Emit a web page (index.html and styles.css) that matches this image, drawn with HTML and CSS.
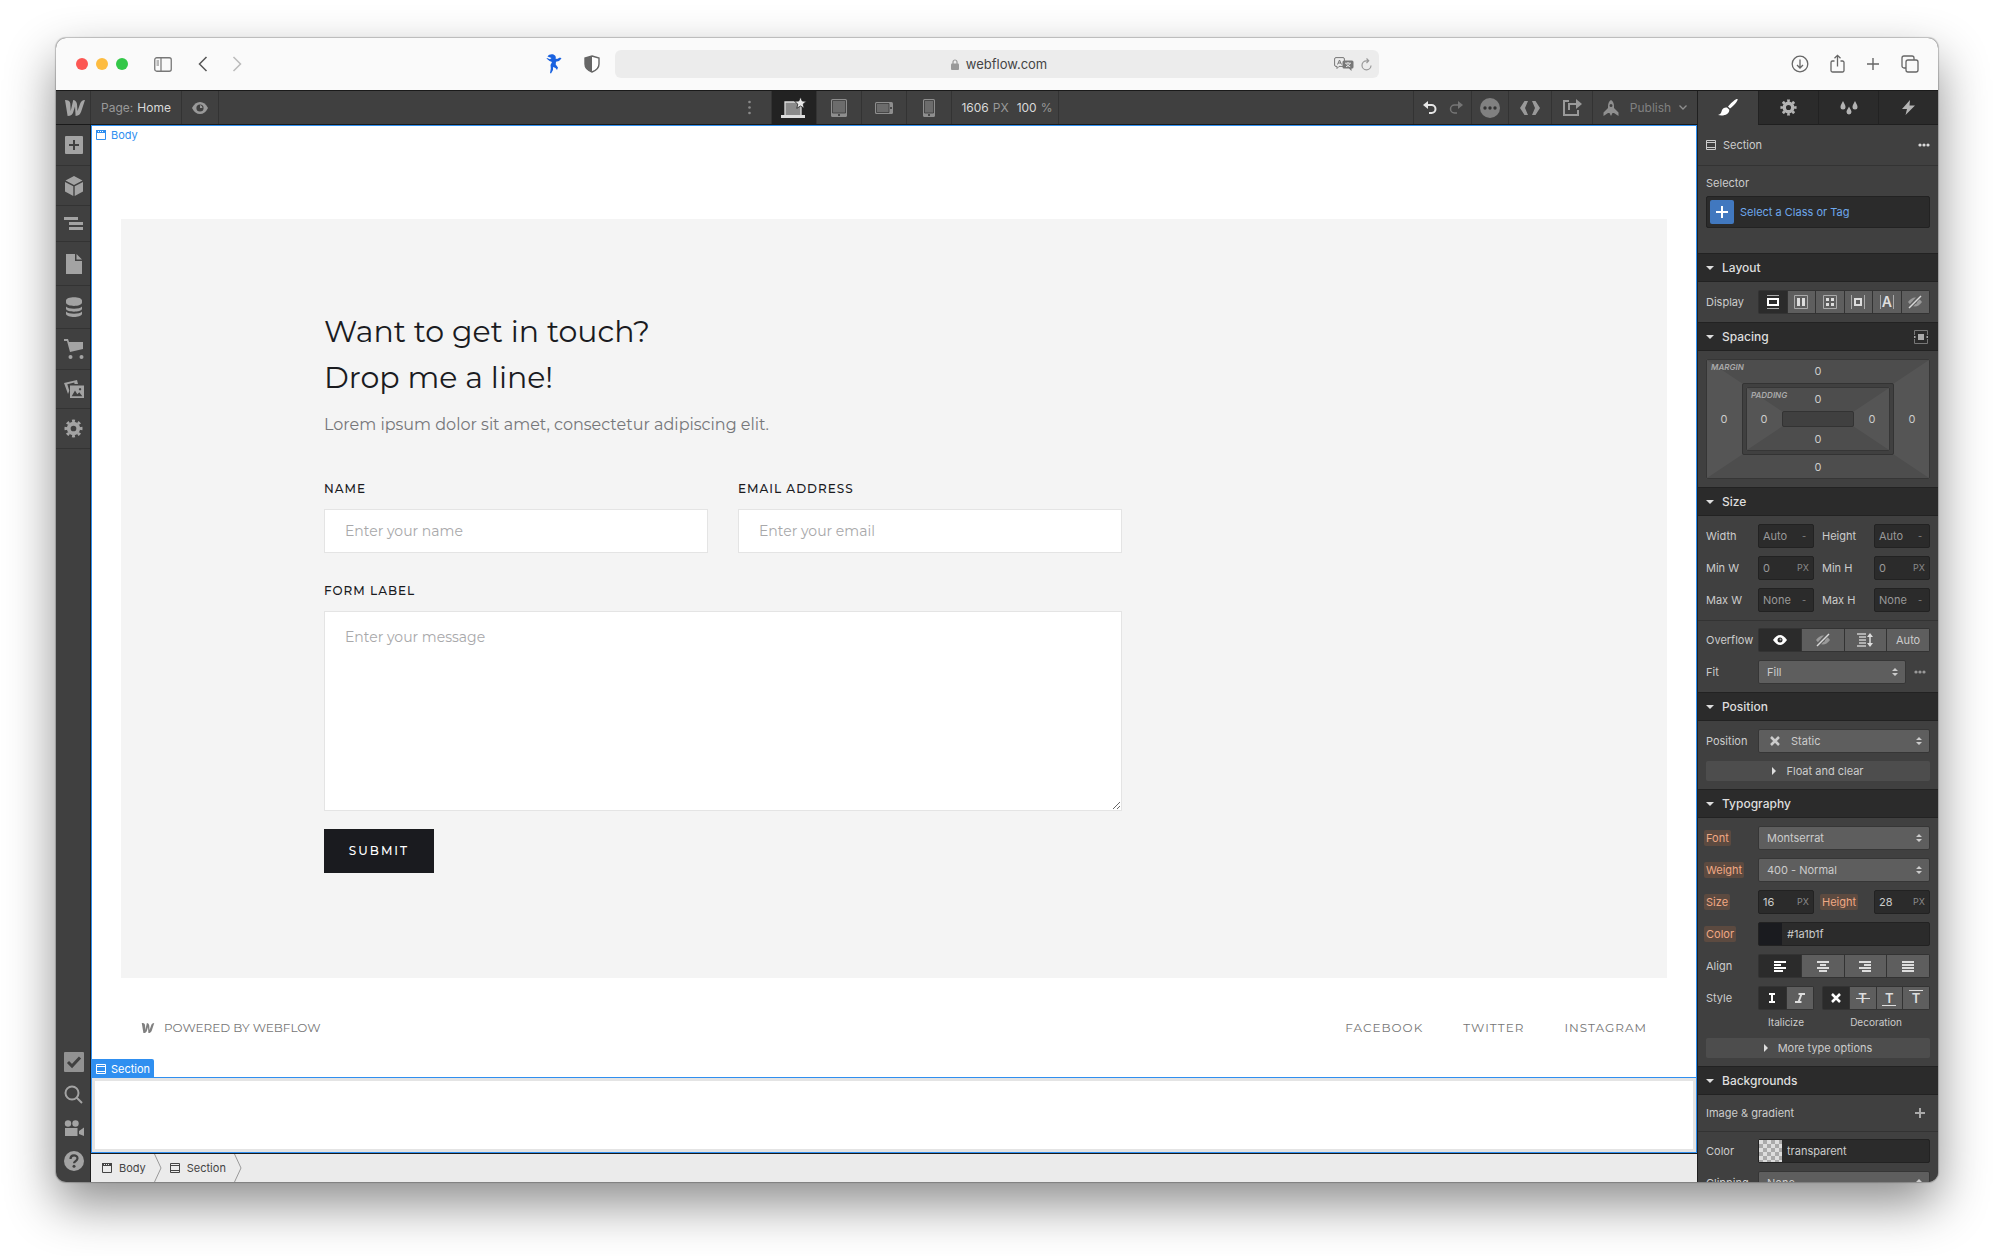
FILE: index.html
```
<!DOCTYPE html>
<html lang="en">
<head>
    <meta charset="UTF-8">
    <meta name="viewport" content="width=device-width, initial-scale=1.0">
    <title>Webflow - Home</title>
    <link rel="stylesheet" href="styles.css">
</head>
<body>

<!-- shared icons -->
<svg class="sprite" aria-hidden="true">
    <symbol id="i-body" viewBox="0 0 10 10"><path d="M.5 1.5h9v8h-9z" fill="none" stroke="currentColor"/><path d="M0 0h10v3H0z" fill="currentColor"/><path d="M2 1h1v1H2zM4 1h1v1H4zM6 1h1v1H6z" fill="var(--hole)"/></symbol>
    <symbol id="i-section" viewBox="0 0 10 10"><path d="M.5.5h9v9h-9zM0 2.5h10M0 7.5h10" fill="none" stroke="currentColor"/></symbol>
    <symbol id="i-gear" viewBox="0 0 20 20"><circle cx="10" cy="10" r="5" fill="none" stroke="currentColor" stroke-width="4"/><circle cx="10" cy="10" r="8" fill="none" stroke="currentColor" stroke-width="3" pathLength="16" stroke-dasharray="1 1" stroke-dashoffset=".5"/></symbol>
    <symbol id="i-noeye" viewBox="0 0 16 14"><path d="M1 7q7-9 14 0q-7 9-14 0z" fill="#999"/><circle cx="8" cy="7" r="2" fill="#5e5e5e"/><path d="M2 13 13 1" stroke="#5e5e5e" stroke-width="4"/><path d="M2 13 14 1" stroke="#d9d9d9" stroke-width="1.5"/></symbol>
    <symbol id="i-updown" viewBox="0 0 6 8"><path d="M0 3h6L3 0zM0 5h6L3 8z" fill="currentColor"/></symbol>
    <symbol id="i-dots" viewBox="0 0 12 4"><circle cx="2" cy="2" r="1.6"/><circle cx="6" cy="2" r="1.6"/><circle cx="10" cy="2" r="1.6"/></symbol>
    <symbol id="i-logo" viewBox="0 0 20 16"><path d="M20 0c-3 0-4.300 2-5 3.900L12.500 11S12.200 4.500 11.800 3.200C11.300 1.300 9.900 0 8.200 0L5.700 11S5.400 4.100 5.200 3C4.800 1 3.300 0 0 0l2.600 16C6 16 7.500 14.200 8.200 12.200L10 6.500l.6 9.500c3.300 0 4.700-2 5.500-4.200z"/></symbol>
    <symbol id="i-x" viewBox="0 0 10 10"><path d="M1 1l8 8M9 1 1 9" stroke="currentColor" stroke-width="2.500"/></symbol>
</svg>

<div class="window">
    <header class="titlebar">
        <div class="title-left">
            <div class="lights"><i class="red"></i><i class="yellow"></i><i class="green"></i></div>
            <button class="plain side-toggle" aria-label="Sidebar"><svg width="18" height="15" viewBox="0 0 18 15" fill="none" stroke="#777"><rect x=".75" y=".75" width="16.500" height="13.500" rx="2" stroke-width="1.300"/><path d="M7 1v13" stroke-width="1.200"/><path d="M2.500 4h2.500M2.500 6h2.500M2.500 8h2.500"/></svg></button>
            <button class="plain back" aria-label="Back"><svg width="10" height="16" viewBox="0 0 10 16" fill="none" stroke="#555" stroke-width="1.500"><path d="M8.500 1 1.500 8l7 7"/></svg></button>
            <button class="plain" aria-label="Forward"><svg width="10" height="16" viewBox="0 0 10 16" fill="none" stroke="#bbb" stroke-width="1.500"><path d="m1.500 1 7 7-7 7"/></svg></button>
            <div class="extensions">
                <svg width="16" height="20" viewBox="0 0 16 20" fill="#1a62e0"><path d="M1.500 2.500C3 0 7-.5 9 1.500c1 1 1 2 .5 3L11 5l3-1.500 1.500 1L13 7l-3 .8-.3 2.700 2.300 3-1 2.500-1.500-2-2.500-1L7 16l-2 3.500L4 19l.8-4.500L4.500 11 6 8 3.500 7 .5 4.500 1 4l3 1.300L5.500 4z"/></svg>
                <svg width="16" height="18" viewBox="0 0 16 18"><path d="M8 1 15 3v6c0 4-3 6.500-7 8-4-1.500-7-4-7-8V3z" fill="#fff" stroke="#666" stroke-width="1.400"/><path d="M8 1v16C4 15.500 1 13 1 9V3z" fill="#666"/></svg>
            </div>
        </div>
        <div class="address">
            <div class="url"><svg width="8" height="11" viewBox="0 0 8 11"><rect y="4.500" width="8" height="6.500" rx="1" fill="#999"/><path d="M2 5V3a2 2 0 0 1 4 0v2" fill="none" stroke="#999" stroke-width="1.200"/></svg><span>webflow.com</span></div>
            <svg width="20" height="14" viewBox="0 0 20 14"><path d="M2 .6h7A1.400 1.400 0 0 1 10.400 2v6A1.400 1.400 0 0 1 9 9.400H5L3 11.500V9.400H2A1.400 1.400 0 0 1 .6 8V2A1.400 1.400 0 0 1 2 .6z" fill="none" stroke="#777"/><path d="M3.500 7.500 5.500 3l2 4.500M4.200 6h2.600" fill="none" stroke="#777"/><path d="M10 3.500h8a1.500 1.500 0 0 1 1.500 1.500v5a1.500 1.500 0 0 1-1.500 1.500h-.5V14L15 11.500h-5A1.500 1.500 0 0 1 8.500 10V5A1.500 1.500 0 0 1 10 3.500z" fill="#777"/><path d="M11 6.200h6M14 5v1.200M12 9.800q3-1 4-3.400M12.300 6.600q1 2.500 4 3.200" fill="none" stroke="#eee" stroke-width=".9"/></svg>
            <svg width="11" height="13" viewBox="0 0 11 13" fill="none" stroke="#999" stroke-width="1.200"><path d="M10 7.500a4.500 4.500 0 1 1-4.500-4.700H7M5.500.5l2.200 2.300L5.500 5"/></svg>
        </div>
        <div class="title-right">
            <button class="plain" aria-label="Downloads"><svg width="18" height="18" viewBox="0 0 18 18" fill="none" stroke="#666" stroke-width="1.300"><circle cx="9" cy="9" r="7.800"/><path d="M9 4.500v8M6 10l3 3 3-3"/></svg></button>
            <button class="plain" aria-label="Share"><svg width="15" height="20" viewBox="0 0 15 20" fill="none" stroke="#666" stroke-width="1.300"><path d="M4.500 7H2.500A1.500 1.500 0 0 0 1 8.500v8A1.500 1.500 0 0 0 2.500 18h10a1.500 1.500 0 0 0 1.500-1.500v-8A1.500 1.500 0 0 0 12.500 7h-2M7.500 12.500V1.500M4.500 4.300l3-3 3 3"/></svg></button>
            <button class="plain" aria-label="New tab"><svg width="14" height="14" viewBox="0 0 14 14" stroke="#666" stroke-width="1.400"><path d="M7 1v12M1 7h12"/></svg></button>
            <button class="plain" aria-label="Tabs"><svg width="18" height="18" viewBox="0 0 18 18" fill="none" stroke="#666" stroke-width="1.300"><rect x="5" y="5" width="12" height="12" rx="2"/><path d="M5 13H3a2 2 0 0 1-2-2V3a2 2 0 0 1 2-2h8a2 2 0 0 1 2 2v2"/></svg></button>
        </div>
    </header>

    <div class="app">
        <div class="main">
            <nav class="topbar">
                <a href="#" class="cell logo" aria-label="Dashboard"><svg width="20" height="16" fill="#a6a6a6"><use href="#i-logo"/></svg></a>
                <button class="cell page-name">Page: <b>Home</b></button>
                <button class="cell preview" aria-label="Preview"><svg width="16" height="12" viewBox="0 0 16 12"><path d="M0 6q3-6 8-6t8 6q-3 6-8 6T0 6z" fill="#999"/><circle cx="8" cy="6" r="3.600" fill="#404040"/><path d="M8 6V3a3 3 0 0 1 2.500 3z" fill="#999"/></svg></button>
                <div class="space-left"></div>
                <button class="cell more" aria-label="More breakpoints"><svg width="3" height="15" viewBox="0 0 3 15" fill="#8a8a8a"><circle cx="1.500" cy="2" r="1.300"/><circle cx="1.500" cy="7.500" r="1.300"/><circle cx="1.500" cy="13" r="1.300"/></svg></button>
                <button class="cell device active" aria-label="Desktop"><svg width="26" height="22" viewBox="0 0 26 22"><path d="M4 5h16v14H4z" fill="#8a8a8a" stroke="#ddd" stroke-width="1.300"/><path d="M0 18h24v3H0z" fill="#ddd"/><path d="m19.500 0 1.700 4 4.300.3-3.300 2.800 1 4.200-3.700-2.300-3.700 2.300 1-4.200L13.500 4.300l4.300-.3z" fill="#e6e6e6" stroke="#222" stroke-width=".8"/></svg></button>
                <button class="cell device" aria-label="Tablet"><svg width="16" height="18" viewBox="0 0 16 18"><rect width="16" height="18" rx="1.500" fill="#8e8e8e"/><path d="M1.500 1.500h13V14h-13z" fill="#6c6c6c" stroke="#3a3a3a" stroke-width=".8"/><circle cx="8" cy="16" r="1" fill="#333"/></svg></button>
                <button class="cell device" aria-label="Mobile landscape"><svg width="18" height="12" viewBox="0 0 18 12"><rect width="18" height="12" rx="1.500" fill="#8e8e8e"/><path d="M1.500 1.500h12.500v9H1.500z" fill="#6c6c6c" stroke="#3a3a3a" stroke-width=".8"/><circle cx="16" cy="6" r="1" fill="#333"/></svg></button>
                <button class="cell device" aria-label="Mobile portrait"><svg width="12" height="18" viewBox="0 0 12 18"><rect width="12" height="18" rx="1.500" fill="#8e8e8e"/><path d="M1.500 1.500h9V14h-9z" fill="#6c6c6c" stroke="#3a3a3a" stroke-width=".8"/><circle cx="6" cy="16" r="1" fill="#333"/></svg></button>
                <button class="cell canvas-size"><b>1606</b> PX <b class="zoom">100</b> %</button>
                <div class="space-right"></div>
                <div class="cell history">
                    <button class="plain" aria-label="Undo"><svg width="14" height="13" viewBox="0 0 14 13" fill="none" stroke="#e6e6e6" stroke-width="2"><path d="M3 4h5.500a4 4 0 0 1 0 8H6"/><path d="M5 0v8L0 4z" fill="#e6e6e6" stroke="none"/></svg></button>
                    <button class="plain" aria-label="Redo"><svg width="14" height="13" viewBox="0 0 14 13" fill="none" stroke="#757575" stroke-width="1.500"><path d="M11 4H5.500a4 4 0 0 0 0 8H8"/><path d="M9 0v8l5-4z" fill="#757575" stroke="none"/></svg></button>
                </div>
                <button class="cell status" aria-label="Status"><svg width="20" height="20" viewBox="0 0 20 20"><circle cx="10" cy="10" r="10" fill="#808080"/><g fill="#333"><circle cx="5" cy="10" r="1.700"/><circle cx="10" cy="10" r="1.700"/><circle cx="15" cy="10" r="1.700"/></g></svg></button>
                <button class="cell export" aria-label="Export code"><svg width="20" height="14" viewBox="0 0 20 14" fill="#999"><path d="M4.500 0H8L5 7l3 7H4.500L0 7zM15.500 0H12l3 7-3 7h3.500L20 7z"/></svg></button>
                <button class="cell share" aria-label="Share"><svg width="19" height="17" viewBox="0 0 19 17" fill="none" stroke="#999" stroke-width="2"><path d="M6 2H1v14h14v-5M6 11V5h7"/><path d="M13 0v10l6-5z" fill="#999" stroke="none"/></svg></button>
                <button class="cell publish"><svg width="16" height="16" viewBox="0 0 16 16" fill="#8f8f8f"><path fill-rule="evenodd" d="M8 0c2 1 3 3.500 3 6v2l4.500 4.500V16L11 13H9.500L8 16l-1.500-3H5L.5 16v-3.500L5 8V6c0-2.500 1-5 3-6zm0 4a1.500 1.500 0 1 0 0 3 1.500 1.500 0 0 0 0-3z"/></svg><span>Publish</span><svg width="8" height="5" viewBox="0 0 8 5" fill="none" stroke="#8f8f8f" stroke-width="1.300"><path d="m.5.5 3.500 3.500L7.500.5"/></svg></button>
            </nav>

            <div class="workspace">
                <aside class="rail">
                    <button class="h41" aria-label="Add"><svg width="18" height="18" viewBox="0 0 18 18"><rect width="18" height="18" rx="1" fill="#a3a3a3"/><path d="M9 4v10M4 9h10" stroke="#404040" stroke-width="2"/></svg></button>
                    <button class="h40" aria-label="Components"><svg width="18" height="20" viewBox="0 0 18 20" fill="#a3a3a3"><path d="m9 0 8.500 4.500L9 9 .5 4.500zM0 6l8.300 4.300V20L0 15.500zM18 6l-8.300 4.300V20l8.300-4.500z"/></svg></button>
                    <button class="h36" aria-label="Navigator"><svg width="19" height="13" viewBox="0 0 19 13" fill="#a3a3a3"><path d="M0 0h14v3H0zM5 5h14v3H5zM5 10h14v3H5z"/></svg></button>
                    <button class="h44" aria-label="Pages"><svg width="16" height="20" viewBox="0 0 16 20" fill="#a3a3a3"><path d="M0 0h9v7h7v13H0zM10.500 0l5.500 5.500h-5.500z"/></svg></button>
                    <button class="h43" aria-label="CMS"><svg width="16" height="20" viewBox="0 0 16 20" fill="#a3a3a3"><path d="M0 3.500C0-1 16-1 16 3.500v2C16 10 0 10 0 5.500zM0 9.500c2 3 14 3 16 0v2.500c-1 3.500-15 3.500-16 0zM0 14.500c2 3 14 3 16 0V17c-1 4-15 4-16 0z"/></svg></button>
                    <button class="h41" aria-label="Ecommerce"><svg width="20" height="20" viewBox="0 0 20 20" fill="#a3a3a3"><path d="M0 0h4l1 3h14v7L6 13 3 2H0z"/><circle cx="6.500" cy="18" r="2"/><circle cx="17.500" cy="18" r="2"/></svg></button>
                    <button class="h39" aria-label="Assets"><svg width="20" height="18" viewBox="0 0 20 18"><path d="m0 3 13-3 1 4h-3.500l-.2-1.500-7 1.700 2 6.500L4 14z" fill="#a3a3a3"/><path fill-rule="evenodd" d="M6 5.500h14V18H6zm1.700 10.700h10.600l-3-4-2 2L11 10.500zM16 8a1.200 1.200 0 1 0 .1 0z" fill="#a3a3a3"/></svg></button>
                    <button class="h40" aria-label="Settings"><svg width="19" height="19" color="#a3a3a3"><use href="#i-gear"/></svg></button>
                    <div class="rail-bottom">
                        <button aria-label="Audit"><svg width="20" height="20" viewBox="0 0 20 20"><rect width="20" height="20" rx="1" fill="#929292"/><path d="m4 10 4 4 8-8.500" fill="none" stroke="#404040" stroke-width="3"/></svg></button>
                        <button aria-label="Search"><svg width="19" height="19" viewBox="0 0 19 19" fill="none" stroke="#a3a3a3" stroke-width="2"><circle cx="8" cy="8" r="6.500"/><path d="m12.500 12.500 5.500 5.500"/></svg></button>
                        <button aria-label="Video tutorials"><svg width="20" height="16" viewBox="0 0 20 16" fill="#a3a3a3"><circle cx="4" cy="3.500" r="3.200"/><circle cx="11.500" cy="3.500" r="3.200"/><path d="M1 8h12.500v8H1zM15 11l5-3.500V16l-5-2z"/></svg></button>
                        <button aria-label="Help"><svg width="20" height="20" viewBox="0 0 20 20"><circle cx="10" cy="10" r="10" fill="#a3a3a3"/><path d="M6.500 8c0-5 7-4.500 7-.7 0 2.700-3.500 2.700-3.500 5" fill="none" stroke="#404040" stroke-width="2.200"/><circle cx="10" cy="15.300" r="1.500" fill="#404040"/></svg></button>
                    </div>
                </aside>

                <div class="stage">
                    <div class="canvas">
                        <span class="body-tag"><svg width="10" height="10"><use href="#i-body"/></svg>Body</span>
                        <section class="contact">
                            <div class="container">
                                <form class="contact-form">
                                    <h1>Want to get in touch?<br>Drop me a line!</h1>
                                    <p>Lorem ipsum dolor sit amet, consectetur adipiscing elit.</p>
                                    <div class="form-row">
                                        <div>
                                            <label for="name">NAME</label>
                                            <input type="text" id="name" placeholder="Enter your name">
                                        </div>
                                        <div>
                                            <label for="email">EMAIL ADDRESS</label>
                                            <input type="email" id="email" placeholder="Enter your email">
                                        </div>
                                    </div>
                                    <label for="message">FORM LABEL</label>
                                    <textarea id="message" placeholder="Enter your message"></textarea>
                                    <button type="submit" class="submit">SUBMIT</button>
                                </form>
                            </div>
                        </section>
                        <footer class="footer">
                            <a href="#" class="powered"><svg width="14" height="10" fill="#808080"><use href="#i-logo"/></svg>POWERED BY WEBFLOW</a>
                            <div class="social">
                                <a href="#">FACEBOOK</a>
                                <a href="#">TWITTER</a>
                                <a href="#">INSTAGRAM</a>
                            </div>
                        </footer>
                        <div class="empty-section">
                            <span class="section-tag"><svg width="10" height="10"><use href="#i-section"/></svg>Section</span>
                        </div>
                    </div>
                    <div class="crumbs">
                        <a href="#"><svg width="10" height="10"><use href="#i-body"/></svg>Body</a>
                        <svg class="sep" width="8" height="28" viewBox="0 0 8 28" fill="none" stroke="#999"><path d="m.5 0 6.500 14-6.500 14"/></svg>
                        <a href="#"><svg width="10" height="10"><use href="#i-section"/></svg>Section</a>
                        <svg class="sep" width="8" height="28" viewBox="0 0 8 28" fill="none" stroke="#999"><path d="m.5 0 6.500 14-6.500 14"/></svg>
                    </div>
                </div>
            </div>
        </div>

        <aside class="panel">
            <div class="tabs">
                <button class="active" aria-label="Style"><svg width="20" height="17" viewBox="0 0 20 17" fill="#fff"><path d="M19.500 0c1 1-3.500 6.500-7.500 9.500L10 7.500C13 4 18.500-1 19.500 0zM9 8.500l2.300 2.200C11.500 15 6 17.500 0 16c3-1 3.200-2.500 3.800-4.500C4.600 9 7 8 9 8.500z"/></svg></button>
                <button aria-label="Settings"><svg width="17" height="17" color="#b3b3b3"><use href="#i-gear"/></svg></button>
                <button aria-label="Style manager"><svg width="18" height="14" viewBox="0 0 18 14" fill="#b3b3b3"><path d="M3 0c1.500 3 2.500 4.500 2.500 6a2.500 2.500 0 0 1-5 0C.5 4.500 1.500 3 3 0zM15 0c1.500 3 2.500 4.500 2.500 6a2.500 2.500 0 0 1-5 0c0-1.500 1-3 2.500-6zM9 5.500c1.500 3 2.500 4 2.500 5.500a2.500 2.500 0 0 1-5 0c0-1.500 1-2.500 2.500-5.500z"/></svg></button>
                <button aria-label="Interactions"><svg width="13" height="15" viewBox="0 0 13 15" fill="#b3b3b3"><path d="M8 0 0 9h5l-1.500 6L13 5.500H7.500z"/></svg></button>
            </div>
            <div class="element-row"><svg width="10" height="10"><use href="#i-section"/></svg><span>Section</span><button class="plain" aria-label="Options"><svg width="12" height="4" fill="#d9d9d9"><use href="#i-dots"/></svg></button></div>
            <div class="selector">
                <label for="selector">Selector</label>
                <div class="selector-box"><span class="plus"><svg width="12" height="12" viewBox="0 0 12 12" stroke="#fff" stroke-width="2"><path d="M6 0v12M0 6h12"/></svg></span><input id="selector" type="text" placeholder="Select a Class or Tag"></div>
            </div>

            <button class="head">Layout</button>
            <div class="group">
                <div class="row"><span>Display</span>
                    <div class="buttons">
                        <button class="on" aria-label="Block"><svg width="12" height="14" viewBox="0 0 12 14" fill="none" stroke="#aaa"><path d="M0 .5h12M0 13.500h12"/><path d="M1 4h10v6H1z" stroke="#fff" stroke-width="2"/></svg></button>
                        <button aria-label="Flex"><svg width="14" height="14" viewBox="0 0 14 14"><path d="M.5.5h13v13H.5z" fill="none" stroke="#aaa"/><path d="M3 3h3v8H3zM8 3h3v8H8z" fill="#ddd"/></svg></button>
                        <button aria-label="Grid"><svg width="14" height="14" viewBox="0 0 14 14"><path d="M.5.5h13v13H.5z" fill="none" stroke="#aaa"/><path d="M3 3h3v3H3zM8 3h3v3H8zM3 8h3v3H3zM8 8h3v3H8z" fill="#ddd"/></svg></button>
                        <button aria-label="Inline block"><svg width="14" height="14" viewBox="0 0 14 14" fill="none"><path d="M.5 0v14M13.500 0v14" stroke="#aaa"/><path d="M4 4h6v6H4z" stroke="#ddd" stroke-width="2"/></svg></button>
                        <button class="inline-a" aria-label="Inline"><span>A</span></button>
                        <button aria-label="None"><svg width="16" height="14"><use href="#i-noeye"/></svg></button>
                    </div>
                </div>
            </div>

            <button class="head">Spacing<svg class="head-icon" width="14" height="14" viewBox="0 0 14 14"><path d="M.5 5V.5h13V5M.5 9v4.500h13V9" fill="none" stroke="#777"/><path d="M4 4h6v6H4z" fill="#aaa"/><path d="M0 6h1.500v2H0zM12.500 6H14v2h-1.500z" fill="#aaa"/></svg></button>
            <div class="group">
                <div class="bevel margin-box">
                    <em>MARGIN</em>
                    <span>0</span><span>0</span>
                    <div class="gutter">
                        <div class="bevel padding-box">
                            <em>PADDING</em>
                            <span>0</span><span>0</span>
                            <div class="core"></div>
                            <span>0</span><span>0</span>
                        </div>
                    </div>
                    <span>0</span><span>0</span>
                </div>
            </div>

            <button class="head">Size</button>
            <div class="group">
                <div class="row pair"><label for="w">Width</label><div class="field dim"><input id="w" value="Auto"><small>-</small></div><label for="h">Height</label><div class="field dim"><input id="h" value="Auto"><small>-</small></div></div>
                <div class="row pair"><label for="minw">Min W</label><div class="field dim"><input id="minw" value="0"><small>PX</small></div><label for="minh">Min H</label><div class="field dim"><input id="minh" value="0"><small>PX</small></div></div>
                <div class="row pair"><label for="maxw">Max W</label><div class="field dim"><input id="maxw" value="None"><small>-</small></div><label for="maxh">Max H</label><div class="field dim"><input id="maxh" value="None"><small>-</small></div></div>
            </div>
            <div class="group ruled">
                <div class="row"><span>Overflow</span>
                    <div class="buttons">
                        <button class="on" aria-label="Visible"><svg width="14" height="10" viewBox="0 0 14 10"><path d="M0 5q7-10 14 0-7 10-14 0z" fill="#fff"/><circle cx="7" cy="5" r="2.500" fill="#2b2b2b"/><circle cx="7.500" cy="4.500" r="1" fill="#aaa"/></svg></button>
                        <button aria-label="Hidden"><svg width="16" height="14"><use href="#i-noeye"/></svg></button>
                        <button aria-label="Scroll"><svg width="16" height="14" viewBox="0 0 16 14"><path d="M0 1h9M2 4h7M2 7h7M2 10h7M0 13h9" stroke="#ccc" stroke-width="1.300"/><path d="M13 2v10" stroke="#ddd" stroke-width="1.500"/><path d="M10 4h6l-3-4zM10 10h6l-3 4z" fill="#ddd"/></svg></button>
                        <button>Auto</button>
                    </div>
                </div>
                <div class="row fit"><label for="fit">Fit</label>
                    <div class="select"><select id="fit"><option>Fill</option></select><svg width="6" height="8"><use href="#i-updown"/></svg></div>
                    <button class="plain" aria-label="Fit options"><svg width="12" height="4" fill="#999"><use href="#i-dots"/></svg></button>
                </div>
            </div>

            <button class="head">Position</button>
            <div class="group">
                <div class="row"><label for="position">Position</label>
                    <div class="select with-icon"><svg class="lead" width="10" height="10"><use href="#i-x"/></svg><select id="position"><option>Static</option></select><svg width="6" height="8"><use href="#i-updown"/></svg></div>
                </div>
                <button class="expand">Float and clear</button>
            </div>

            <button class="head">Typography</button>
            <div class="group">
                <div class="row"><label for="font" class="set">Font</label><div class="select"><select id="font"><option>Montserrat</option></select><svg width="6" height="8"><use href="#i-updown"/></svg></div></div>
                <div class="row"><label for="weight" class="set">Weight</label><div class="select"><select id="weight"><option>400 - Normal</option></select><svg width="6" height="8"><use href="#i-updown"/></svg></div></div>
                <div class="row pair"><label for="size" class="set">Size</label><div class="field"><input id="size" value="16"><small>PX</small></div><label for="lh" class="set">Height</label><div class="field"><input id="lh" value="28"><small>PX</small></div></div>
                <div class="row"><label for="color" class="set">Color</label><div class="field"><span class="swatch ink"></span><input id="color" value="#1a1b1f"></div></div>
                <div class="row"><span>Align</span>
                    <div class="buttons">
                        <button class="on" aria-label="Left"><svg width="12" height="11" viewBox="0 0 12 11" fill="#fff"><path d="M0 0h12v2H0zM0 3h7v2H0zM0 6h12v2H0zM0 9h9v2H0z"/></svg></button>
                        <button aria-label="Center"><svg width="12" height="11" viewBox="0 0 12 11" fill="#ddd"><path d="M0 0h12v2H0zM3 3h6v2H3zM0 6h12v2H0zM2 9h8v2H2z"/></svg></button>
                        <button aria-label="Right"><svg width="12" height="11" viewBox="0 0 12 11" fill="#ddd"><path d="M0 0h12v2H0zM5 3h7v2H5zM0 6h12v2H0zM3 9h9v2H3z"/></svg></button>
                        <button aria-label="Justify"><svg width="12" height="11" viewBox="0 0 12 11" fill="#ddd"><path d="M0 0h12v2H0zM0 3h12v2H0zM0 6h12v2H0zM0 9h12v2H0z"/></svg></button>
                    </div>
                </div>
                <div class="row style-row"><span>Style</span>
                    <div>
                        <div class="buttons">
                            <button class="on" aria-label="Regular"><svg width="8" height="10" viewBox="0 0 8 10" fill="none" stroke="#fff" stroke-width="2"><path d="M1 1h6M4 1v8M1 9h6"/></svg></button>
                            <button aria-label="Italic"><svg width="10" height="10" viewBox="0 0 10 10" fill="none" stroke="#ddd" stroke-width="2"><path d="M3.500 1H10M6.500 1l-3 8M0 9h6.500"/></svg></button>
                        </div>
                        <small>Italicize</small>
                    </div>
                    <div>
                        <div class="buttons">
                            <button class="on" aria-label="No decoration"><svg width="10" height="10"><use href="#i-x"/></svg></button>
                            <button class="deco strike" aria-label="Strikethrough"><span>T</span></button>
                            <button class="deco under" aria-label="Underline"><span>T</span></button>
                            <button class="deco over" aria-label="Overline"><span>T</span></button>
                        </div>
                        <small>Decoration</small>
                    </div>
                </div>
                <button class="expand">More type options</button>
            </div>

            <button class="head">Backgrounds</button>
            <div class="image-row"><span>Image &amp; gradient</span><button class="plain" aria-label="Add background"><svg width="10" height="10" viewBox="0 0 10 10" stroke="#aaa" stroke-width="2"><path d="M5 0v10M0 5h10"/></svg></button></div>
            <div class="group ruled">
                <div class="row"><label for="bg">Color</label><div class="field"><span class="swatch checker"></span><input id="bg" value="transparent"></div></div>
                <div class="row"><label for="clip">Clipping</label><div class="select"><select id="clip"><option>None</option></select><svg width="6" height="8"><use href="#i-updown"/></svg></div></div>
            </div>
        </aside>
    </div>
</div>

</body>
</html>
```
FILE: styles.css
```
* {
    box-sizing: border-box;
}

body {
    margin: 0;
    height: 100vh;
    padding: 38px 56px 74px;
    background: #fff;
    font-family: Inter, "Liberation Sans", sans-serif;
    font-size: 11px;
    line-height: 16px;
}

button, input, select, textarea {
    font: inherit;
    color: inherit;
    margin: 0;
}

button {
    padding: 0;
    border: 0;
    background: none;
    cursor: pointer;
}

a {
    color: inherit;
    text-decoration: none;
}

svg {
    display: block;
    flex: none;
}

.sprite {
    position: absolute;
    width: 0;
    height: 0;
}

.plain {
    display: flex;
}

.window {
    height: 100%;
    display: flex;
    flex-direction: column;
    border-radius: 10px;
    overflow: hidden;
    background: #404040;
    box-shadow: 0 0 1px 1px rgba(0, 0, 0, 0.22), 0 22px 50px rgba(0, 0, 0, 0.45);
}

/* browser bar */
.titlebar {
    flex: none;
    display: grid;
    grid-template-columns: 1fr minmax(0, 764px) 1fr;
    align-items: center;
    height: 53px;
    background: #fafafa;
    border-bottom: 1px solid #1a1a1a;
}

.title-left, .title-right {
    display: flex;
    align-items: center;
}

.title-left {
    padding: 0 15px 0 20px;
}

.lights {
    display: flex;
    gap: 8px;
    margin-right: 26px;
}

.lights i {
    width: 12px;
    height: 12px;
    border-radius: 50%;
}

.red { background: #fc5753; }
.yellow { background: #fdbc40; }
.green { background: #33c748; }

.side-toggle {
    margin-right: 26px;
}

.back {
    margin-right: 24px;
}

.extensions {
    display: flex;
    align-items: center;
    gap: 22px;
    margin-left: auto;
}

.title-right {
    justify-content: flex-end;
    gap: 21px;
    padding-right: 19px;
}

.address {
    display: flex;
    align-items: center;
    gap: 7px;
    height: 28px;
    padding: 0 7px 0 56px;
    border-radius: 6px;
    background: #ececec;
    color: #444;
    font-size: 13px;
}

.url {
    flex: 1;
    display: flex;
    justify-content: center;
    align-items: center;
    gap: 7px;
}

.app {
    flex: 1;
    min-height: 0;
    display: flex;
}

.main {
    flex: 1;
    min-width: 0;
    display: flex;
    flex-direction: column;
    border-right: 1px solid #1f1f1f;
}

/* designer top bar */
.topbar {
    flex: none;
    display: flex;
    height: 34px;
    border-bottom: 1px solid #1a1a1a;
    color: #999;
    font-size: 12px;
}

.cell {
    display: flex;
    align-items: center;
    justify-content: center;
    border-right: 1px solid #333;
}

.cell b {
    font-weight: 400;
    color: #d9d9d9;
    margin: 0 4px;
}

.logo {
    width: 35px;
    padding-left: 3px;
}

.page-name { width: 91px; }
.page-name b { margin-right: 0; }
.preview { width: 37px; }
.space-left { flex: 37; }
.space-right { flex: 25; }

.more {
    width: 29px;
    justify-content: flex-start;
    padding-left: 5px;
}

.device { width: 45px; }
.device.active { background: #222; }
.canvas-size { width: 107px; }
.canvas-size .zoom { margin-left: 8px; }

.history {
    width: 59px;
    gap: 12px;
    border-left: 1px solid #333;
}

.status { width: 37px; }
.export { width: 43px; }
.share { width: 41px; }

.publish {
    width: 104px;
    gap: 8px;
    border-right: 0;
    color: #808080;
}

.publish span {
    margin-left: 3px;
}

.workspace {
    flex: 1;
    min-height: 0;
    display: flex;
}

/* left rail */
.rail {
    flex: none;
    width: 35px;
    display: flex;
    flex-direction: column;
    border-right: 1px solid #1f1f1f;
}

.rail button {
    display: flex;
    align-items: center;
    justify-content: center;
    padding-left: 1px;
}

.rail > button {
    border-bottom: 1px solid #333;
}

.h36 { height: 36px; }
.h39 { height: 39px; }
.h40 { height: 40px; }
.h41 { height: 41px; }
.h43 { height: 43px; }
.h44 { height: 44px; }

.rail-bottom {
    margin-top: auto;
    padding-bottom: 5px;
}

.rail-bottom button {
    width: 100%;
    height: 33px;
}

/* canvas */
.stage {
    flex: 1;
    min-width: 0;
    display: flex;
    flex-direction: column;
}

.canvas {
    flex: 1;
    min-height: 0;
    display: flex;
    flex-direction: column;
    position: relative;
    border: 1px solid #2f8ff0;
    background: #fff;
    --hole: #fff;
    font-family: Montserrat, Inter, sans-serif;
}

.body-tag, .section-tag {
    position: absolute;
    display: flex;
    align-items: center;
    gap: 5px;
    font-family: Inter, sans-serif;
    font-size: 11px;
}

.body-tag {
    top: 1px;
    left: 4px;
    color: #2f8ff0;
}

.contact {
    margin: 93px 29px 0;
    padding: 90px 30px 105px;
    background: #f4f4f4;
}

.container {
    max-width: 1140px;
    margin: 0 auto;
}

.contact-form {
    width: 70%;
    color: #1a1b1f;
}

.contact-form h1 {
    margin: 0 0 10px;
    font-size: 30px;
    line-height: 46px;
    font-weight: 400;
}

.contact-form p {
    margin: 0 0 40px;
    font-size: 16px;
    line-height: 28px;
    color: #76777a;
}

.form-row {
    display: grid;
    grid-template-columns: 1fr 1fr;
    gap: 30px;
    margin-bottom: 28px;
}

.contact-form label {
    display: block;
    margin-bottom: 10px;
    font-size: 12px;
    line-height: 20px;
    letter-spacing: 1px;
    font-weight: 500;
}

.contact-form input, .contact-form textarea {
    display: block;
    width: 100%;
    height: 44px;
    padding: 12px 20px;
    border: 1px solid #e4e4e4;
    border-radius: 0;
    background: #fff;
    font-size: 14px;
    line-height: 20px;
}

.contact-form textarea {
    height: 200px;
    padding-top: 15px;
}

.contact-form ::placeholder {
    color: #a8a8aa;
}

.submit {
    width: 110px;
    height: 44px;
    margin-top: 18px;
    background: #1a1b1f;
    color: #fff;
    font-size: 12px;
    font-weight: 500;
    letter-spacing: 2px;
}

.footer {
    display: flex;
    justify-content: space-between;
    align-items: center;
    padding: 40px 49px;
    font-size: 12px;
    line-height: 20px;
    color: #757575;
}

.powered {
    display: flex;
    align-items: center;
    gap: 9px;
}

.social {
    display: flex;
    gap: 40px;
    letter-spacing: 1px;
}

.empty-section {
    flex: 1;
    position: relative;
    border: 3px solid #e4e4e4;
    outline: 1px solid #2f8ff0;
}

.section-tag {
    left: -3px;
    bottom: 100%;
    margin-bottom: 3px;
    height: 19px;
    padding: 0 4px;
    border-radius: 0 2px 0 0;
    background: #2f8ff0;
    color: #fff;
}

.crumbs {
    flex: none;
    display: flex;
    height: 29px;
    border-top: 1px solid #1a1a1a;
    background: #ebebeb;
    color: #444;
    --hole: #ebebeb;
}

.crumbs a {
    display: flex;
    align-items: center;
    gap: 7px;
    padding: 0 8px 0 11px;
}

.sep + a {
    padding-left: 8px;
}

/* style panel */
.panel {
    flex: none;
    width: 240px;
    overflow: hidden;
    background: #404040;
    color: #ccc;
}

.tabs {
    display: grid;
    grid-template-columns: repeat(4, 1fr);
    height: 34px;
}

.tabs button {
    display: flex;
    align-items: center;
    justify-content: center;
    background: #2b2b2b;
    border-left: 1px solid #222;
    border-bottom: 1px solid #1f1f1f;
}

.tabs .active {
    padding-right: 2px;
    background: #404040;
    border-color: #404040;
}

.element-row, .image-row {
    display: flex;
    align-items: center;
    gap: 7px;
    height: 41px;
    padding: 0 8px;
    border-bottom: 1px solid #333;
}

.element-row .plain, .image-row .plain {
    margin-left: auto;
}

.image-row {
    height: 36px;
    padding-right: 13px;
    border-bottom: 0;
}

.selector {
    padding: 9px 8px 25px;
}

.selector label {
    display: block;
    margin-bottom: 5px;
}

.selector-box {
    display: flex;
    align-items: center;
    height: 32px;
    padding: 3px;
    border: 1px solid #222;
    border-radius: 2px;
    background: #2b2b2b;
}

.plus {
    display: flex;
    align-items: center;
    justify-content: center;
    width: 24px;
    height: 24px;
    border-radius: 2px;
    background: #4178bf;
}

.selector-box input, .field input {
    flex: 1;
    min-width: 0;
    width: 0;
    padding: 0 0 0 6px;
    border: 0;
    background: none;
    outline: 0;
}

.selector-box ::placeholder {
    color: #6ea8ec;
}

.head {
    display: flex;
    align-items: center;
    width: 100%;
    height: 29px;
    padding: 0 10px 0 8px;
    border-top: 1px solid #222;
    border-bottom: 1px solid #222;
    background: #2b2b2b;
    color: #dedede;
    font-size: 12px;
    font-weight: 500;
}

.head::before {
    content: "";
    margin-right: 8px;
    border: 4px solid transparent;
    border-top-color: #dedede;
    border-bottom: 0;
}

.head-icon {
    margin-left: auto;
}

.group {
    display: grid;
    gap: 8px;
    padding: 8px;
}

.ruled {
    padding-top: 7px;
    border-top: 1px solid #333;
}

.row {
    display: grid;
    grid-template-columns: 44px 1fr;
    column-gap: 8px;
    align-items: center;
    min-height: 24px;
}

.row > label, .row > span {
    white-space: nowrap;
    justify-self: start;
}

.pair {
    grid-template-columns: 44px 56px 1fr 56px;
}

.fit {
    grid-template-columns: 44px 1fr 16px;
}

.set {
    margin-left: -2px;
    padding: 0 2px;
    border-radius: 2px;
    background: #5c4a40;
    color: #f0a884;
}

.buttons {
    display: flex;
    gap: 1px;
    height: 24px;
    padding: 1px;
    border-radius: 2px;
    background: #333;
}

.buttons button {
    flex: 1;
    display: flex;
    align-items: center;
    justify-content: center;
    background: #5e5e5e;
}

.buttons .on {
    background: #2b2b2b;
    color: #fff;
}

.inline-a span {
    width: 14px;
    border: solid #aaa;
    border-width: 0 1px;
    color: #ddd;
    font-size: 14px;
    line-height: 14px;
    font-weight: 600;
}

.deco span {
    position: relative;
    width: 14px;
    color: #ddd;
    font-size: 13px;
    line-height: 14px;
    font-weight: 600;
}

.deco span::after {
    content: "";
    position: absolute;
    left: 0;
    right: 0;
    top: 7px;
    border-top: 1px solid #ddd;
}

.under span::after { top: 14px; }
.over span::after { top: -1px; }

.field {
    display: flex;
    align-items: center;
    height: 24px;
    border: 1px solid #222;
    border-radius: 2px;
    background: #2b2b2b;
}

.field input {
    padding-left: 4px;
}

.dim input {
    color: #999;
}

.field small {
    padding-right: 4px;
    font-size: 9px;
    color: #8a8a8a;
}

.dim small {
    min-width: 11px;
}

.swatch {
    width: 23px;
    height: 22px;
    margin-right: 1px;
}

.ink { background: #1a1b1f; }
.checker { background: repeating-conic-gradient(#aaa 0 25%, #ddd 0 50%) 0 0 / 8px 8px; }

.select {
    display: flex;
    align-items: center;
    height: 24px;
    padding-right: 7px;
    border: 1px solid #363636;
    border-radius: 2px;
    background: #5e5e5e;
}

.select select {
    flex: 1;
    min-width: 0;
    padding: 0 8px;
    border: 0;
    outline: 0;
    appearance: none;
    background: none;
}

.with-icon .lead {
    margin-left: 11px;
    margin-right: 3px;
}

.expand {
    display: flex;
    align-items: center;
    justify-content: center;
    gap: 10px;
    height: 20px;
    border-radius: 2px;
    background: #4d4d4d;
}

.expand::before {
    content: "";
    border: 4px solid transparent;
    border-left-color: #ddd;
    border-right: 0;
}

.style-row {
    grid-template-columns: 44px 56px 1fr;
    align-items: start;
}

.style-row > span {
    line-height: 24px;
}

.style-row small {
    display: block;
    padding-top: 4px;
    font-size: 10px;
    line-height: 16px;
    text-align: center;
}

/* margin and padding editor: side faces are lighter than top and bottom */
.bevel {
    position: relative;
    display: grid;
    grid-template-columns: 36px 1fr 36px;
    grid-template-rows: 24px 1fr 24px;
    place-items: center;
    border-radius: 2px;
    outline: 1px solid #363636;
    outline-offset: -1px;
    background: #4d4d4d;
}

.bevel::before {
    content: "";
    position: absolute;
    inset: 1px;
    background: #555;
    clip-path: polygon(0 0, 36px 24px, calc(100% - 36px) 24px, 100% 0, 100% 100%, calc(100% - 36px) calc(100% - 24px), 36px calc(100% - 24px), 0 100%);
}

.bevel > * {
    position: relative;
}

.bevel > span:nth-of-type(1) { grid-area: 1 / 2; }
.bevel > span:nth-of-type(2) { grid-area: 2 / 1; }
.bevel > span:nth-of-type(3) { grid-area: 2 / 3; }
.bevel > span:nth-of-type(4) { grid-area: 3 / 2; }

.bevel em {
    grid-area: 1 / 1 / 2 / 3;
    place-self: start;
    padding-left: 5px;
    font-size: 8px;
    font-weight: 600;
    color: #aaa;
}

.margin-box {
    height: 120px;
}

.gutter, .core {
    grid-area: 2 / 2;
    place-self: stretch;
    border: 1px solid #333;
    border-radius: 2px;
    background: #404040;
}

.gutter {
    display: grid;
    padding: 3px;
}
```
